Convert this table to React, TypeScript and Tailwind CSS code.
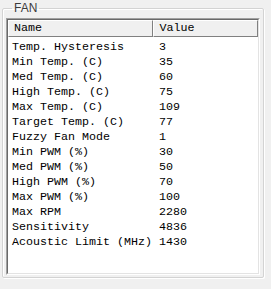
const rows: [string, string][] = [
  ["Temp. Hysteresis", "3"],
  ["Min Temp. (C)", "35"],
  ["Med Temp. (C)", "60"],
  ["High Temp. (C)", "75"],
  ["Max Temp. (C)", "109"],
  ["Target Temp. (C)", "77"],
  ["Fuzzy Fan Mode", "1"],
  ["Min PWM (%)", "30"],
  ["Med PWM (%)", "50"],
  ["High PWM (%)", "70"],
  ["Max PWM (%)", "100"],
  ["Max RPM", "2280"],
  ["Sensitivity", "4836"],
  ["Acoustic Limit (MHz)", "1430"],
];

const mono = { fontFamily: '"Liberation Mono", "Courier New", monospace' };

export default function App() {
  return (
    <div className="w-[271px] h-[289px] bg-[#f0f0f0] pl-[2px] pt-[2px]">
      <fieldset className="w-[261px] h-[276px] border border-[#d3d3d3] rounded-[2px] px-[3px] m-0 shadow-[inset_1px_1px_0_#ffffff,1px_1px_0_#ffffff]">
        <legend
          className="ml-[6px] px-[2px] text-[12px] leading-[12px] text-[#3c3c3c]"
          style={{ fontFamily: '"Liberation Sans", Arial, sans-serif' }}
        >
          FAN
        </legend>
        <div className="mt-[4px] w-[254px] h-[257px] border border-t-[#a0a0a0] border-l-[#a0a0a0] border-b-white border-r-white">
          <div className="w-full h-full border border-t-[#696969] border-l-[#696969] border-b-[#e3e3e3] border-r-[#e3e3e3] bg-white text-[11.67px] text-black" style={mono}>
            <div className="flex h-[17px] leading-[15px] bg-[#f0f0f0]">
              <div className="w-[146px] pl-[5px] border border-t-white border-l-white border-r-[#808080] border-b-[#808080]">
                Name
              </div>
              <div className="w-[105px] pl-[5px] border border-t-white border-l-white border-r-[#808080] border-b-[#808080]">
                Value
              </div>
            </div>
            <div className="pt-[3px]">
              {rows.map(([name, value]) => (
                <div key={name} className="flex h-[15px] leading-[15px]">
                  <div className="w-[146px] pl-[4px] whitespace-nowrap">{name}</div>
                  <div className="pl-[5px] whitespace-nowrap">{value}</div>
                </div>
              ))}
            </div>
          </div>
        </div>
      </fieldset>
    </div>
  );
}
